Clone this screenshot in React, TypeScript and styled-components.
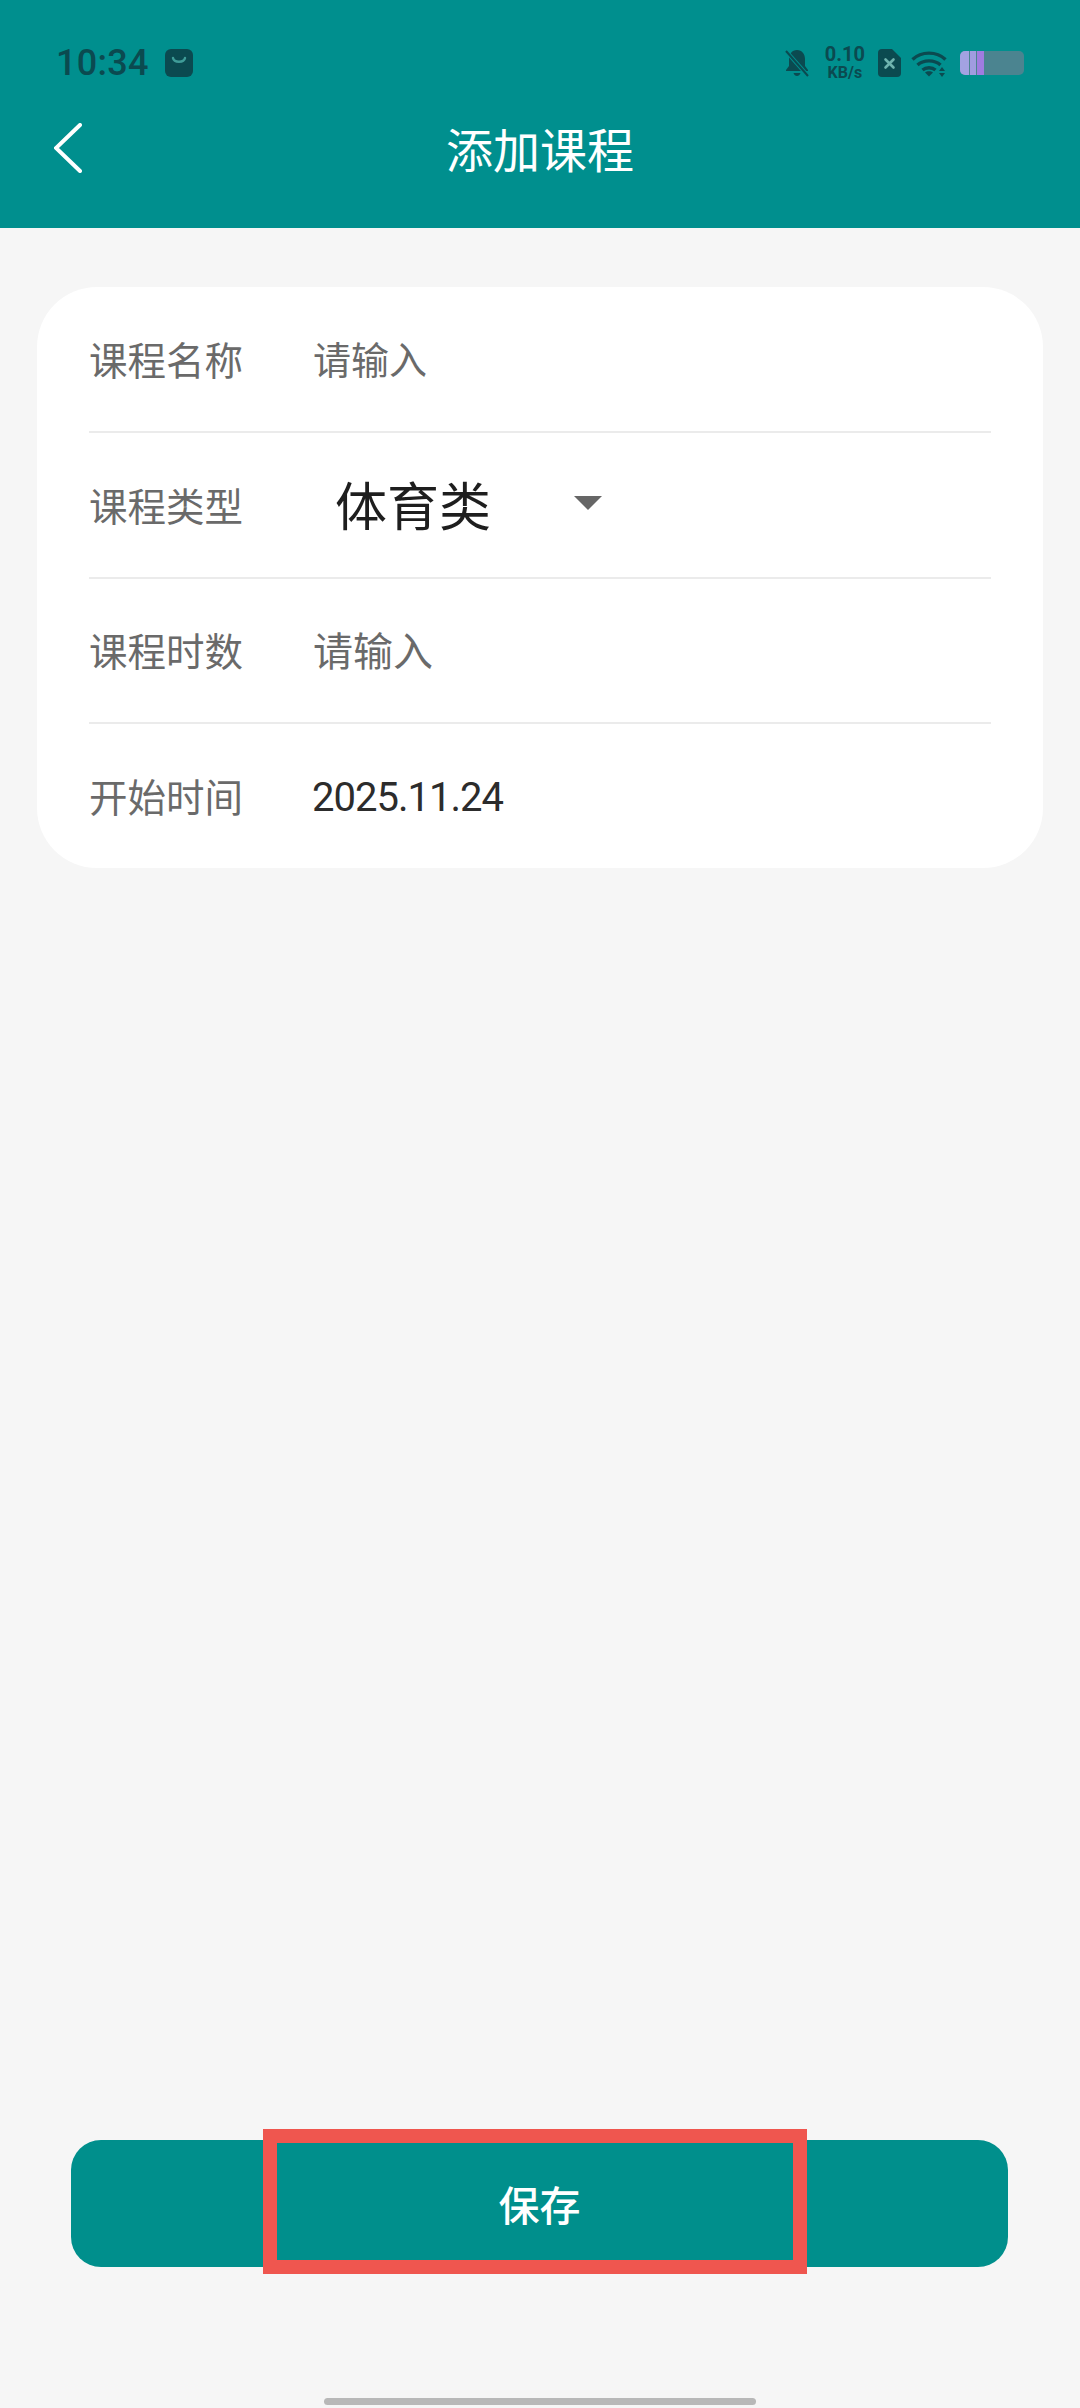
import React from "react";
import styled, { createGlobalStyle } from "styled-components";

const GlobalStyle = createGlobalStyle`
  html, body {
    margin: 0;
    padding: 0;
    background: #f6f6f6;
    font-family: "Noto Sans CJK SC", "Noto Sans", sans-serif;
  }
  * { box-sizing: border-box; }
`;

const Page = styled.div`
  width: 1080px;
  height: 2408px;
  display: flex;
  flex-direction: column;
  background: #f6f6f6;
  overflow: hidden;
`;

const Header = styled.header`
  height: 228px;
  background: #008f8e;
  display: flex;
  flex-direction: column;
`;

const StatusBar = styled.div`
  height: 100px;
  padding: 48px 56px 0 56px;
  display: flex;
  justify-content: space-between;
  align-items: flex-start;
  color: #0b4a50;
`;

const StatusGroup = styled.div`
  display: flex;
  align-items: center;
  height: 30px;
`;

const Clock = styled.span`
  font-family: Roboto, sans-serif;
  font-size: 36px;
  font-weight: 500;
  line-height: 30px;
  letter-spacing: 0.3px;
  margin-right: 16px;
`;

const NetSpeed = styled.div`
  display: flex;
  flex-direction: column;
  align-items: center;
  margin: 0 13px 0 16px;
  font-family: Roboto, sans-serif;
  font-weight: 700;
`;

const NetValue = styled.span`
  font-size: 20px;
  line-height: 19px;
`;

const NetUnit = styled.span`
  font-size: 16px;
  line-height: 17px;
`;

const Spacer = styled.span<{ $width: number }>`
  width: ${(p) => p.$width}px;
`;

const TitleBar = styled.div`
  display: grid;
  grid-template-columns: 1fr auto 1fr;
  align-items: center;
  padding-bottom: 4px;
  height: 100px;
`;

const BackButton = styled.span`
  display: flex;
  padding-left: 54px;
`;

const Title = styled.h1`
  margin: 0;
  color: #ffffff;
  font-size: 47px;
  font-weight: 400;
  line-height: 60px;
`;

const Card = styled.section`
  margin: 59px 37px 0;
  height: 581px;
  padding: 0 52px;
  background: #ffffff;
  border-radius: 60px;
  display: flex;
  flex-direction: column;
`;

const Row = styled.div<{ $last?: boolean }>`
  flex: 1;
  display: flex;
  align-items: center;
  border-bottom: ${(p) => (p.$last ? "none" : "2px solid #ebebeb")};
`;

const Label = styled.span`
  width: 224px;
  flex-shrink: 0;
  margin-bottom: 2px;
  color: #6a6a6a;
  font-size: 38.5px;
  font-weight: 400;
`;

const Placeholder = styled.span<{ $size: number }>`
  margin-bottom: 2px;
  color: #6a6a6a;
  font-size: ${(p) => p.$size}px;
`;

const DateValue = styled.span`
  margin: 2px 0 0 -1px;
  color: #2c2c2c;
  font-family: Roboto, sans-serif;
  font-size: 40px;
  letter-spacing: -1px;
`;

const SelectValue = styled.span`
  margin: 0 0 2px 22px;
  color: #1e1e1e;
  font-size: 52px;
`;

const SelectArrow = styled.span`
  margin: 0 0 4px 83px;
  width: 0;
  height: 0;
  border-left: 14px solid transparent;
  border-right: 14px solid transparent;
  border-top: 14px solid #666666;
`;

const Footer = styled.div`
  margin-top: auto;
  display: flex;
  flex-direction: column;
  align-items: center;
`;

const SaveButton = styled.button`
  position: relative;
  width: 937px;
  height: 127px;
  margin-left: -1px;
  padding: 0 0 2px;
  border: none;
  border-radius: 30px;
  background: #008f8c;
  color: #ffffff;
  font-family: inherit;
  font-size: 41px;
  font-weight: 500;
`;

const Highlight = styled.span`
  position: absolute;
  left: 192px;
  top: -11px;
  width: 544px;
  height: 145px;
  border: 14px solid #ef564f;
`;

const HomeBar = styled.div`
  margin: 131px 0 3px;
  width: 432px;
  height: 7px;
  border-radius: 4px;
  background: #b8b8b8;
`;

const BagIcon = () => (
  <svg width="28" height="28" viewBox="0 0 28 28">
    <rect width="28" height="28" rx="6" fill="#0b4a50" />
    <path d="M8 9c1 5 11 5 12 0" fill="none" stroke="#3f9c98" strokeWidth="2.4" strokeLinecap="round" />
  </svg>
);

const BellOffIcon = () => (
  <svg width="24" height="28" viewBox="0 0 24 28">
    <path
      d="M12 1c-5 0-8 4-8 9v7l-3 4v1h22v-1l-3-4v-7c0-5-3-9-8-9zM8.5 24c.6 2 2 3 3.5 3s2.9-1 3.5-3z"
      fill="#0b4a50"
    />
    <path d="M1 2l22 25" stroke="#008f8e" strokeWidth="4" />
    <path d="M1 2l22 25" stroke="#0b4a50" strokeWidth="2" />
  </svg>
);

const SimIcon = () => (
  <svg width="23" height="28" viewBox="0 0 23 28">
    <path d="M4 0h10l9 9v15a4 4 0 0 1-4 4H4a4 4 0 0 1-4-4V4a4 4 0 0 1 4-4z" fill="#0b4a50" />
    <path d="M7.5 10.5l8 8M15.5 10.5l-8 8" stroke="#6fb3ae" strokeWidth="2.6" strokeLinecap="round" />
  </svg>
);

const WifiIcon = () => (
  <svg width="36" height="27" viewBox="0 0 36 27" fill="none" stroke="#0b4a50" strokeWidth="3.4">
    <path d="M1.5 9.5c9-8.5 24-8.5 33 0" />
    <path d="M6.5 15c6-5.5 17-5.5 23 0" />
    <path d="M11.5 20c3.5-3 9.5-3 13 0" />
    <path d="M18 26.5l-4-4c2-1.6 6-1.6 8 0z" fill="#0b4a50" stroke="none" />
    <path d="M31 17l-3 4h6zM31 27l-3-4h6z" fill="#0b4a50" stroke="none" />
  </svg>
);

const BatteryIcon = () => (
  <svg width="64" height="24" viewBox="0 0 64 24">
    <rect width="64" height="24" rx="5" fill="#4b8490" />
    <path d="M5 0h4v24H5a5 5 0 0 1-5-5V5a5 5 0 0 1 5-5z" fill="#a3a2e2" />
    <rect x="10" width="6" height="24" fill="#a09ce0" />
    <rect x="17" width="7" height="24" fill="#a07ce0" />
  </svg>
);

const BackIcon = () => (
  <svg width="28" height="50" viewBox="0 0 28 50" fill="none" stroke="#ffffff" strokeWidth="4" strokeLinecap="round">
    <path d="M26 2L2 25l24 23" />
  </svg>
);

export default function App() {
  return (
    <Page>
      <GlobalStyle />
      <Header>
        <StatusBar>
          <StatusGroup>
            <Clock>10:34</Clock>
            <BagIcon />
          </StatusGroup>
          <StatusGroup>
            <BellOffIcon />
            <NetSpeed>
              <NetValue>0.10</NetValue>
              <NetUnit>KB/s</NetUnit>
            </NetSpeed>
            <SimIcon />
            <Spacer $width={10} />
            <WifiIcon />
            <Spacer $width={13} />
            <BatteryIcon />
          </StatusGroup>
        </StatusBar>
        <TitleBar>
          <BackButton>
            <BackIcon />
          </BackButton>
          <Title>添加课程</Title>
        </TitleBar>
      </Header>

      <Card>
        <Row>
          <Label>课程名称</Label>
          <Placeholder $size={38}>请输入</Placeholder>
        </Row>
        <Row>
          <Label>课程类型</Label>
          <SelectValue>体育类</SelectValue>
          <SelectArrow />
        </Row>
        <Row>
          <Label>课程时数</Label>
          <Placeholder $size={40}>请输入</Placeholder>
        </Row>
        <Row $last>
          <Label>开始时间</Label>
          <DateValue>2025.11.24</DateValue>
        </Row>
      </Card>

      <Footer>
        <SaveButton>
          保存
          <Highlight />
        </SaveButton>
        <HomeBar />
      </Footer>
    </Page>
  );
}
